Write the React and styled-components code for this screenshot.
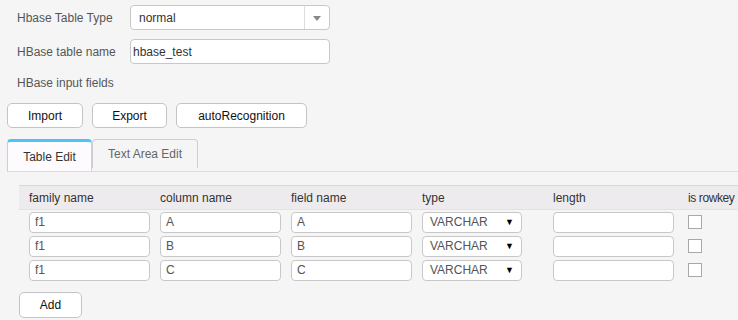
import React from 'react';
import styled, {createGlobalStyle} from 'styled-components';

const GlobalStyle = createGlobalStyle`
  body {
    margin: 0;
    background: #f5f5f5;
    font-family: "Liberation Sans", Arial, sans-serif;
    font-size: 12px;
  }
`

const Page = styled.div`
  width: 738px;
  height: 320px;
  overflow: hidden;
  padding-top: 5px;
  box-sizing: border-box;
`

const FormRow = styled.div`
  display: flex;
  align-items: center;
  height: 25px;
  padding-left: 17px;
  margin-bottom: ${p => p.$gap || 9}px;
`

const Label = styled.label`
  width: 113px;
  color: #555;
`

const SelectBox = styled.div`
  width: 200px;
  height: 25px;
  box-sizing: border-box;
  border: 1px solid #c8c8c8;
  border-radius: 4px;
  background: #fff;
  display: flex;
  align-items: center;
  color: #333;
  & > span {
    flex: 1;
    padding-left: 8px;
  }
`

const ArrowCell = styled.div`
  width: 24px;
  height: 100%;
  border-left: 1px solid #ddd;
  display: flex;
  align-items: center;
  justify-content: center;
  &::after {
    content: '';
    border-left: 4px solid transparent;
    border-right: 4px solid transparent;
    border-top: 5px solid #888;
    margin-top: 1px;
  }
`

const TextInput = styled.input`
  width: ${p => p.$w || 200}px;
  height: ${p => p.$h || 25}px;
  box-sizing: border-box;
  border: 1px solid #c8c8c8;
  border-radius: 4px;
  background: #fff;
  padding: 0 ${p => p.$pad || 2}px;
  font-family: inherit;
  font-size: 12px;
  color: ${p => p.$color || '#333'};
  outline: none;
`

const SectionTitle = styled.div`
  padding-left: 17px;
  color: #555;
  height: 19px;
  line-height: 19px;
  margin-bottom: 10px;
`

const ButtonRow = styled.div`
  display: flex;
  gap: 9px;
  padding-left: 7px;
  margin-bottom: 11px;
`

const Button = styled.button`
  width: ${p => p.$w}px;
  height: ${p => p.$h || 25}px;
  background: #fff;
  border: 1px solid #c4c4c4;
  border-radius: 5px;
  font-family: inherit;
  font-size: 12px;
  color: #111;
  padding: 0;
`

const Tabs = styled.div`
  display: flex;
  align-items: flex-start;
  margin-left: 7px;
  height: 32px;
  border-bottom: 1px solid #dcdcdc;
`

const Tab = styled.div`
  box-sizing: border-box;
  width: ${p => p.$w}px;
  height: ${p => p.$active ? 32 : 29}px;
  display: flex;
  align-items: center;
  justify-content: center;
  color: ${p => p.$active ? '#333' : '#666'};
  background: ${p => p.$active ? '#fdfbfe' : '#f5f5f5'};
  border: 1px solid #cfcfcf;
  border-top: ${p => p.$active ? '3px solid #4cc4f6' : '1px solid #cfcfcf'};
  border-bottom: none;
  border-radius: 4px 4px 0 0;
  padding-top: ${p => p.$active ? 1 : 0}px;
  margin-bottom: -1px;
`

const Grid = styled.div`
  margin: 13px 0 0 19px;
`

const columns = 'repeat(5, 131px) 1fr'

const HeaderRow = styled.div`
  display: grid;
  grid-template-columns: ${columns};
  padding-left: 10px;
  height: 23px;
  align-items: center;
  background: #eeebee;
  border-top: 1px solid #d8d8d8;
  border-bottom: 1px solid #e2e2e2;
  color: #333;
  & > span:last-child {
    padding-left: 4px;
    white-space: nowrap;
    letter-spacing: -0.4px;
  }
`

const DataRow = styled.div`
  display: grid;
  grid-template-columns: ${columns};
  padding-left: 10px;
  height: 24px;
  align-items: center;
  &:first-of-type {
    margin-top: 1px;
  }
`

const TypeSelect = styled.div`
  width: 100px;
  height: 21px;
  box-sizing: border-box;
  border: 1px solid #c8c8c8;
  border-radius: 4px;
  background: #fff;
  display: flex;
  align-items: center;
  justify-content: space-between;
  padding: 0 7px;
  color: #555;
  & > b {
    font-size: 9px;
    color: #000;
  }
`

const Checkbox = styled.div`
  width: 14px;
  height: 14px;
  margin-left: 4px;
  box-sizing: border-box;
  border: 1px solid #a8a8a8;
  background: #fff;
`

const AddButtonWrap = styled.div`
  padding: 10px 0 0 19px;
`

const rows = [
    {family: 'f1', column: 'A', field: 'A'},
    {family: 'f1', column: 'B', field: 'B'},
    {family: 'f1', column: 'C', field: 'C'},
]

const App = () => {
    return (
        <Page>
            <GlobalStyle/>
            <FormRow>
                <Label>Hbase Table Type</Label>
                <SelectBox>
                    <span>normal</span>
                    <ArrowCell/>
                </SelectBox>
            </FormRow>
            <FormRow $gap={10}>
                <Label>HBase table name</Label>
                <TextInput defaultValue="hbase_test"/>
            </FormRow>
            <SectionTitle>HBase input fields</SectionTitle>
            <ButtonRow>
                <Button $w={76}>Import</Button>
                <Button $w={75}>Export</Button>
                <Button $w={131}>autoRecognition</Button>
            </ButtonRow>
            <Tabs>
                <Tab $active $w={85}>Table Edit</Tab>
                <Tab $w={106}>Text Area Edit</Tab>
            </Tabs>
            <Grid>
                <HeaderRow>
                    <span>family name</span>
                    <span>column name</span>
                    <span>field name</span>
                    <span>type</span>
                    <span>length</span>
                    <span>is rowkey</span>
                </HeaderRow>
                {rows.map((r, i) => (
                    <DataRow key={i}>
                        <TextInput $w={121} $h={21} $pad={5} $color="#555" defaultValue={r.family}/>
                        <TextInput $w={121} $h={21} $pad={5} $color="#555" defaultValue={r.column}/>
                        <TextInput $w={121} $h={21} $pad={5} $color="#555" defaultValue={r.field}/>
                        <TypeSelect>
                            <span>VARCHAR</span>
                            <b>▼</b>
                        </TypeSelect>
                        <TextInput $w={121} $h={21} $pad={5}/>
                        <Checkbox/>
                    </DataRow>
                ))}
            </Grid>
            <AddButtonWrap>
                <Button $w={63} $h={26}>Add</Button>
            </AddButtonWrap>
        </Page>
    );
};

export default App;
